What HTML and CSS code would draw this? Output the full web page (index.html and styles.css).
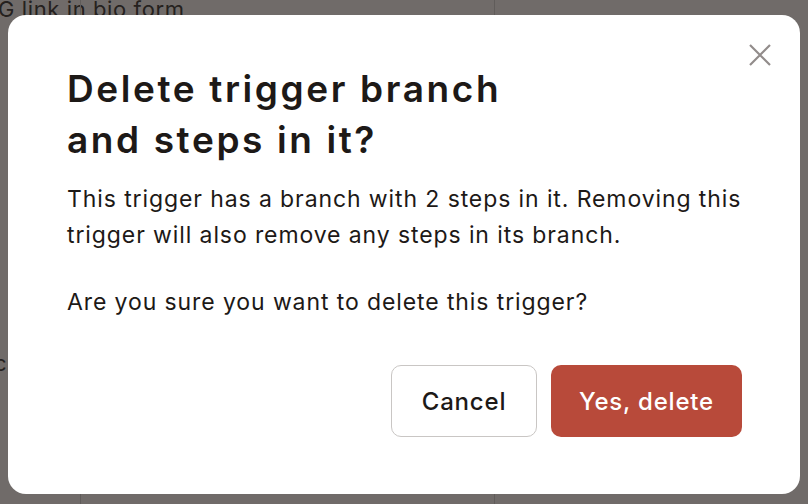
FILE: index.html
```html
<!DOCTYPE html>
<html>
<head>
<meta charset="utf-8">
<link rel="stylesheet" href="styles.css">
</head>
<body>
<div class="backdrop">
  <div class="bg-text">G link in bio form</div>
  <div class="bg-line bg-line-a"></div>
  <div class="bg-line bg-line-b"></div>
  <div class="bg-text bg-text-c">c</div>
</div>
<div class="overlay">
  <div class="modal">
    <button class="close" aria-label="Close">
      <svg width="22" height="22" viewBox="0 0 22 22"><path d="M1 1 L21 21 M21 1 L1 21" stroke="#928c8b" stroke-width="2.2" fill="none"/></svg>
    </button>
    <h1 class="title">Delete trigger branch<br>and steps in it?</h1>
    <p class="text">This trigger has a branch with 2 steps in it. Removing this trigger will also remove any steps in its branch.</p>
    <p class="text text-2">Are you sure you want to delete this trigger?</p>
    <div class="actions">
      <button class="btn btn-cancel">Cancel</button>
      <button class="btn btn-danger">Yes, delete</button>
    </div>
  </div>
</div>
</body>
</html>
```
FILE: styles.css
```css
* { box-sizing: border-box; }
html, body { margin: 0; padding: 0; }
body {
  width: 808px;
  height: 504px;
  overflow: hidden;
  position: relative;
  font-family: Inter, "Noto Sans", sans-serif;
  background: #fbfaf9;
}
.backdrop { position: absolute; inset: 0; }
.bg-text {
  position: absolute;
  left: -2px;
  top: -4px;
  font-size: 22px;
  letter-spacing: 0.6px;
  color: #222;
}
.bg-text-c { top: 350px; left: -6px; }
.bg-line { position: absolute; background: #ccc; }
.bg-line-a { left: 80px; top: 0; bottom: 0; width: 1px; }
.bg-line-b { left: 494px; top: 0; bottom: 0; width: 1px; }
.overlay {
  position: absolute;
  inset: 0;
  background: rgba(40, 34, 31, 0.66);
  padding: 15px 8px 10px 8px;
}
.modal {
  position: relative;
  background: #fff;
  border-radius: 18px;
  height: 479px;
  padding: 48px 58px 57px 59px;
  display: flex;
  flex-direction: column;
  color: #1d1917;
}
.close {
  position: absolute;
  top: 29px;
  right: 29px;
  width: 22px;
  height: 22px;
  padding: 0;
  border: 0;
  background: none;
  display: flex;
}
.title {
  margin: 0;
  font-size: 37px;
  line-height: 51px;
  font-weight: 600;
  letter-spacing: 2.6px;
}
.text {
  margin: 16px 0 0;
  font-size: 23px;
  line-height: 36px;
  font-weight: 400;
  letter-spacing: 0.9px;
}
.text-2 { margin-top: 31px; }
.actions {
  margin-top: auto;
  display: flex;
  justify-content: flex-end;
  gap: 14px;
}
.btn {
  height: 72px;
  border-radius: 10px;
  font-family: Inter, "Noto Sans", sans-serif;
  font-size: 24px;
  font-weight: 500;
  letter-spacing: 0.8px;
  padding: 0;
}
.btn-cancel {
  width: 146px;
  background: #fff;
  border: 1px solid #c9c6c4;
  color: #1d1917;
}
.btn-danger {
  width: 191px;
  background: #b84a3a;
  border: 0;
  color: #fff;
}
```
